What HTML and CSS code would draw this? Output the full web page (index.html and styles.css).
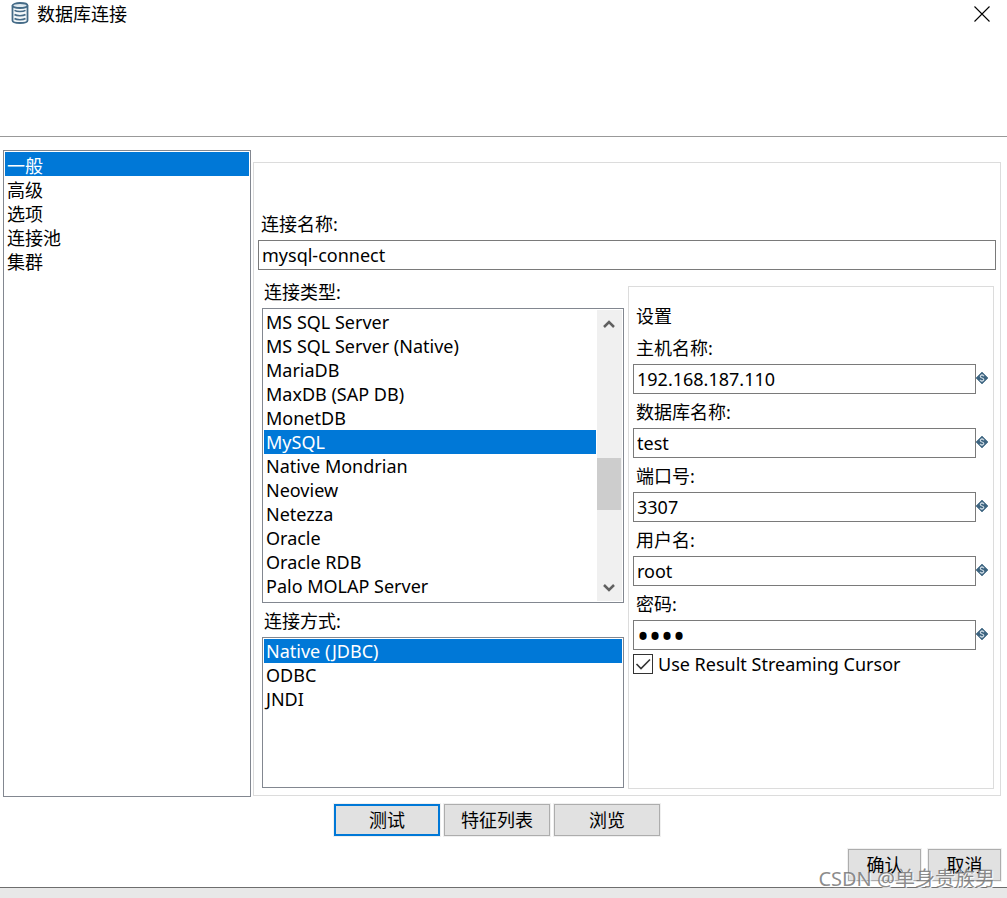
FILE: index.html
```html
<!DOCTYPE html>
<html lang="zh-CN">
<head>
  <meta charset="UTF-8" />
  <title>数据库连接</title>
  <link rel="stylesheet" href="styles.css">
</head>
<body>
  <!-- shared icons -->
  <svg class="defs" width="0" height="0">
    <symbol id="variable" viewBox="0 0 12 12">
      <path d="M6 0 12 6 6 12 0 6z" fill="#3d6480" stroke="#3d6480" stroke-width=".6"/>
      <path d="M8 4.200Q7.400 3.200 6 3.200 4.300 3.200 4.300 4.500 4.300 5.600 6 6 7.800 6.400 7.800 7.500 7.800 8.800 6 8.800 4.600 8.800 4 7.900M6 2v1M6 9v1" fill="none" stroke="#c8d6e0" stroke-width="1.200"/>
    </symbol>
  </svg>

  <div class="dialog">
    <div class="titlebar">
      <svg class="logo" width="18" height="22" viewBox="0 0 18 22">
        <g fill="#f4f8fa" stroke="#456b87" stroke-width="1.800">
          <path d="M1.500 3.500v15c0 1.500 3 2.500 7.500 2.500s7.500-1 7.500-2.500v-15"/>
          <ellipse cx="9" cy="3.500" rx="7.500" ry="2.500" fill="#dfe9ef"/>
          <path d="M3.500 8.300c2.500 1.600 8.500 1.600 11 0M3.500 12.500c2.500 1.600 8.500 1.600 11 0M3.500 16.500c2.500 1.600 8.500 1.600 11 0" fill="none" stroke-width="1.600"/>
        </g>
      </svg>
      <span class="title">数据库连接</span>
      <button class="close" aria-label="关闭">
        <svg width="16" height="16" viewBox="0 0 16 16"><path d="M.5.5l15 15M15.500.5l-15 15" stroke="#000" stroke-width="1.100"/></svg>
      </button>
    </div>

    <div class="main">
      <select class="listbox sidebar" size="5" aria-label="分类">
        <option selected>一般</option>
        <option>高级</option>
        <option>选项</option>
        <option>连接池</option>
        <option>集群</option>
      </select>

      <div class="panel">
        <label for="conn-name">连接名称:</label>
        <input class="text" id="conn-name" type="text" value="mysql-connect">

        <div class="columns">
          <div class="left">
            <label for="conn-type">连接类型:</label>
            <div class="type-box">
              <select class="listbox" id="conn-type" size="12">
                <option>MS SQL Server</option>
                <option>MS SQL Server (Native)</option>
                <option>MariaDB</option>
                <option>MaxDB (SAP DB)</option>
                <option>MonetDB</option>
                <option selected>MySQL</option>
                <option>Native Mondrian</option>
                <option>Neoview</option>
                <option>Netezza</option>
                <option>Oracle</option>
                <option>Oracle RDB</option>
                <option>Palo MOLAP Server</option>
              </select>
              <div class="scrollbar">
                <svg width="12" height="8" viewBox="0 0 12 8"><path d="M1 7l5-5 5 5" fill="none" stroke="#606060" stroke-width="2.500"/></svg>
                <div class="track"><div class="thumb"></div></div>
                <svg width="12" height="8" viewBox="0 0 12 8"><path d="M1 1l5 5 5-5" fill="none" stroke="#606060" stroke-width="2.500"/></svg>
              </div>
            </div>
            <label for="conn-access">连接方式:</label>
            <select class="listbox access" id="conn-access" size="3">
              <option selected>Native (JDBC)</option>
              <option>ODBC</option>
              <option>JNDI</option>
            </select>
          </div>

          <div class="settings">
            <div class="settings-title">设置</div>
            <label for="host">主机名称:</label>
            <div class="field">
              <input class="text" id="host" type="text" value="192.168.187.110">
              <svg width="12" height="12"><use href="#variable"/></svg>
            </div>
            <label for="db">数据库名称:</label>
            <div class="field">
              <input class="text" id="db" type="text" value="test">
              <svg width="12" height="12"><use href="#variable"/></svg>
            </div>
            <label for="port">端口号:</label>
            <div class="field">
              <input class="text" id="port" type="text" value="3307">
              <svg width="12" height="12"><use href="#variable"/></svg>
            </div>
            <label for="user">用户名:</label>
            <div class="field">
              <input class="text" id="user" type="text" value="root">
              <svg width="12" height="12"><use href="#variable"/></svg>
            </div>
            <label for="pass">密码:</label>
            <div class="field">
              <input class="text password" id="pass" type="password" value="root">
              <svg width="12" height="12"><use href="#variable"/></svg>
            </div>
            <div class="check">
              <span class="tick">
                <input type="checkbox" id="cursor" checked>
                <svg width="20" height="20" viewBox="0 0 20 20"><path d="M3.500 10l4.500 4.500L17 5.500" fill="none" stroke="#333" stroke-width="1.600"/></svg>
              </span>
              <label for="cursor">Use Result Streaming Cursor</label>
            </div>
          </div>
        </div>
      </div>
    </div>

    <div class="actions">
      <button class="btn default">测试</button>
      <button class="btn">特征列表</button>
      <button class="btn">浏览</button>
    </div>
    <div class="footer">
      <button class="btn small">确认</button>
      <button class="btn small">取消</button>
    </div>
    <div class="watermark">CSDN @单身贵族男</div>
  </div>
</body>
</html>
```

FILE: styles.css
```css
* {
  box-sizing: border-box;
}
body {
  margin: 0;
  background-color: #e8e8e8;
  color: #000;
  font-family: "Noto Sans", "Noto Sans CJK SC", sans-serif;
  font-size: 18px;
  line-height: 24px;
}
input, select, button {
  margin: 0;
  font: inherit;
  color: inherit;
  border-radius: 0;
  outline: none;
}
svg {
  display: block;
  flex: none;
}
label {
  display: block;
}
.defs {
  position: absolute;
}
.dialog {
  position: relative;
  display: flex;
  flex-direction: column;
  min-height: calc(100vh - 10px);
  background-color: #fff;
  border-bottom: 1px solid #6e6e6e;
  box-shadow: 0 0 10px rgba(0, 0, 0, 0.4);
}

/* title */
.titlebar {
  display: flex;
  align-items: flex-start;
  height: 137px;
  padding: 2px 17px 0 11px;
  border-bottom: 1px solid #999;
}
.title {
  flex: 1;
  margin-left: 8px;
}
.close {
  margin-top: 4px;
  padding: 0;
  border: none;
  background: none;
}

/* list boxes */
.listbox {
  display: block;
  width: 100%;
  padding: 1px;
  border: 1px solid #828790;
  background-color: #fff;
  overflow: hidden;
  scrollbar-width: none;
}
.listbox option {
  height: 24px;
  min-height: 24px;
  padding: 0 2px;
  line-height: 24px;
}
.listbox option:checked {
  background: #0078d7 linear-gradient(#0078d7, #0078d7);
  color: #fff;
}

.main {
  flex: 1;
  display: grid;
  grid-template-columns: 248fr 748fr;
  gap: 2px;
  padding: 13px 6px 0 3px;
}
.sidebar {
  height: 100%;
}
.sidebar option {
  line-height: 22px;
}
.panel {
  margin: 12px 0 1px;
  padding: 49px 4px 6px;
  border: 1px solid #dcdcdc;
}
.panel > label, .settings > label, .settings-title {
  padding-left: 3px;
  margin-bottom: 4px;
}
.text {
  display: block;
  width: 100%;
  height: 30px;
  padding: 0 3px;
  border: 1px solid #7a7a7a;
  background-color: #fff;
}
.password {
  font-size: 32px;
}
.columns {
  display: grid;
  grid-template-columns: 362fr 366fr;
  gap: 4px;
  padding: 0 2px 0 4px;
}
.left {
  padding: 10px 0 1px;
}
.left label {
  padding-left: 2px;
  margin-bottom: 4px;
}
.type-box {
  display: flex;
  height: 295px;
  margin-bottom: 6px;
  padding: 1px;
  border: 1px solid #828790;
}
.type-box .listbox {
  flex: 1;
  height: 100%;
  padding: 0;
  border: none;
}
.scrollbar {
  display: flex;
  flex-direction: column;
  align-items: center;
  width: 26px;
  padding: 10px 1px 9px 0;
  background-color: #f0f0f0;
  border-left: 1px solid #fff;
}
.track {
  flex: 1;
  width: 100%;
}
.thumb {
  height: 52px;
  margin-top: 130px;
  background-color: #cdcdcd;
}
.access {
  height: 151px;
}

/* settings */
.settings {
  margin-top: 16px;
  padding: 17px 5px 0 4px;
  border: 1px solid #dcdcdc;
}
.settings-title {
  margin-bottom: 8px;
}
.field {
  display: flex;
  align-items: center;
  margin-bottom: 6px;
}
.field .text {
  flex: 1;
  min-width: 0;
}
.field svg {
  margin-bottom: 2px;
}
.check {
  display: flex;
  align-items: center;
  gap: 5px;
  margin-top: -4px;
}
.tick {
  position: relative;
  width: 20px;
  height: 20px;
}
.tick input {
  display: block;
  appearance: none;
  width: 20px;
  height: 20px;
  border: 1px solid #333;
  background-color: #fff;
}
.tick svg {
  position: absolute;
  top: 0;
  left: 0;
  visibility: hidden;
  pointer-events: none;
}
.tick input:checked + svg {
  visibility: visible;
}

/* buttons */
.actions {
  display: flex;
  justify-content: center;
  gap: 4px;
  padding: 7px 13px 0 0;
}
.footer {
  display: flex;
  justify-content: flex-end;
  gap: 7px;
  padding: 13px 6px 6px;
}
.btn {
  width: 106px;
  height: 32px;
  padding: 0;
  border: 1px solid #adadad;
  background-color: #e1e1e1;
  box-shadow: 0 0 0 1px #f0f0f0;
}
.btn.default {
  border: 2px solid #0078d7;
}
.btn.small {
  width: 73px;
}
.watermark {
  position: absolute;
  right: 12px;
  bottom: -4px;
  color: rgba(110, 110, 110, 0.8);
  font-size: 20px;
  text-shadow: 1px 1px 1px #fff;
  pointer-events: none;
}
```
